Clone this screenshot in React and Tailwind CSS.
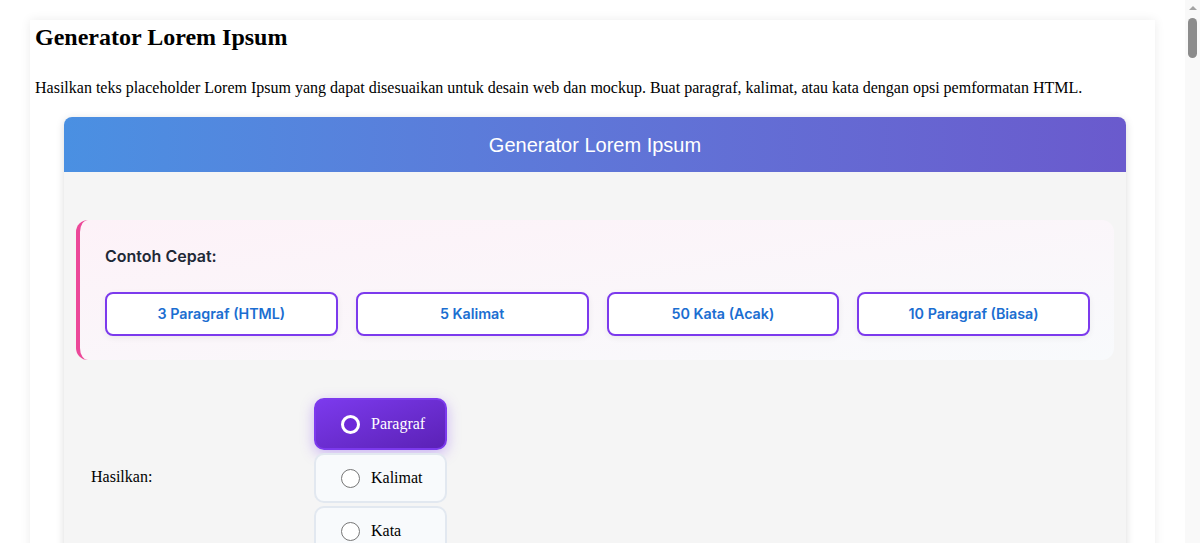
import React from "react";

const quick = ["3 Paragraf (HTML)", "5 Kalimat", "50 Kata (Acak)", "10 Paragraf (Biasa)"];

function Option({ label, selected }) {
  if (selected) {
    return (
      <label className="flex items-center w-[133px] h-[52px] pl-[25px] rounded-[10px] border-2 border-[#7c3aed] bg-gradient-to-br from-[#7c3aed] to-[#5b21b6] shadow-[0_4px_14px_rgba(124,58,237,0.35)] text-white">
        <span className="w-[19px] h-[19px] rounded-full border-[3px] border-white bg-[#6d28d9] shrink-0" />
        <span className="ml-[11px] text-[16px]">{label}</span>
      </label>
    );
  }
  return (
    <label className="flex items-center w-[133px] h-[50px] pl-[25px] rounded-[10px] border-2 border-[#e2e8f0] bg-[#f8fafc] text-black">
      <span className="w-[19px] h-[19px] rounded-full border border-[#767676] bg-white shrink-0" />
      <span className="ml-[11px] text-[16px]">{label}</span>
    </label>
  );
}

function Scrollbar() {
  return (
    <div className="w-[15px] h-screen shrink-0 bg-[#f9f9f9] flex flex-col items-center">
      <div className="h-[15px] flex items-center justify-center">
        <div className="w-0 h-0 border-l-[4px] border-r-[4px] border-b-[4px] border-l-transparent border-r-transparent border-b-[#a3a3a3]" />
      </div>
      <div className="mt-[3px] w-[9px] h-[40px] rounded-full bg-[#8c8c8c]" />
    </div>
  );
}

export default function App() {
  return (
    <div className="flex h-screen overflow-hidden bg-white">
      <div className="flex-1 min-w-0 h-screen overflow-hidden">
        <div className="pt-[20px] pb-[40px] font-['Liberation_Serif','Times_New_Roman',serif] text-black">
          <div className="mx-[30px] bg-white p-[5px] shadow-[0_0_10px_rgba(0,0,0,0.08)]">
            <h1 className="text-[24px] font-bold leading-[24px]">Generator Lorem Ipsum</h1>
            <p className="mt-[30px] text-[16px] leading-[18px]">
              Hasilkan teks placeholder Lorem Ipsum yang dapat disesuaikan untuk desain web dan mockup. Buat paragraf, kalimat, atau kata dengan opsi pemformatan HTML.
            </p>
            <div className="mt-[20px] ml-[29px] w-[1062px] rounded-t-[8px] shadow-[0_2px_8px_rgba(0,0,0,0.15)] overflow-hidden">
              <div className="h-[55px] flex items-center justify-center bg-gradient-to-r from-[#4a90e2] to-[#6a5acd] text-white text-[20px] font-['Liberation_Sans',Arial,sans-serif]">
                Generator Lorem Ipsum
              </div>
              <div className="bg-[#f5f5f5] pt-[48px] px-[12px] pb-[60px]">
                <div className="rounded-[12px] border-l-4 border-[#ec4899] bg-gradient-to-br from-[#fdf2f8] to-[#f8fafc] p-[24px] pl-[25px] font-['Inter',sans-serif]">
                  <div className="text-[16px] leading-[24px] font-semibold text-[#1f2937]">Contoh Cepat:</div>
                  <div className="mt-[24px] grid grid-cols-4 gap-[18px]">
                    {quick.map((q) => (
                      <button
                        key={q}
                        className="h-[44px] rounded-[8px] border-2 border-[#7c3aed] bg-white text-[14.3px] font-semibold text-[#1b6ed1] shadow-[0_2px_6px_rgba(0,0,0,0.06)]"
                      >
                        {q}
                      </button>
                    ))}
                  </div>
                </div>
                <div className="mt-[38px] flex items-center">
                  <div className="w-[238px] pl-[15px] text-[16px]">Hasilkan:</div>
                  <div className="flex flex-col gap-[3px]">
                    <Option label="Paragraf" selected />
                    <Option label="Kalimat" />
                    <Option label="Kata" />
                  </div>
                </div>
                <div className="mt-[24px] flex items-center">
                  <div className="w-[238px] pl-[15px] text-[16px]">Jumlah:</div>
                  <input className="w-[200px] h-[40px] border border-[#ccc] rounded bg-white px-2" defaultValue="3" />
                </div>
              </div>
            </div>
          </div>
        </div>
      </div>
      <Scrollbar />
    </div>
  );
}
